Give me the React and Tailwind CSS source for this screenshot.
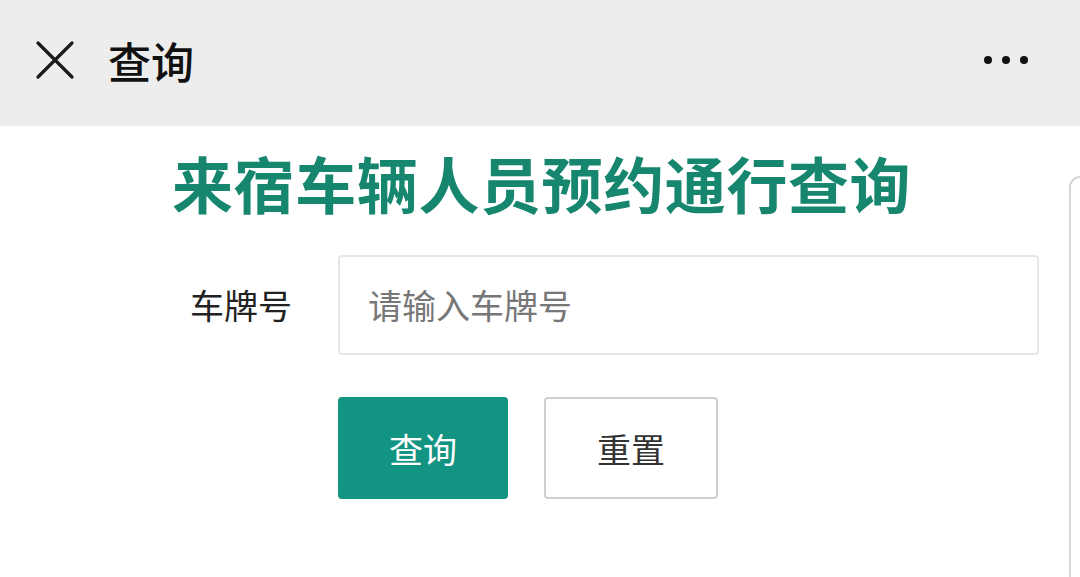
import React from "react";

const font = { fontFamily: '"Noto Sans CJK SC", "Noto Sans", sans-serif' };

const App = () => {
  return (
    <div className="w-[1080px] h-[577px] bg-white overflow-hidden flex flex-col" style={font}>
      {/* top bar */}
      <div className="h-[126px] bg-[#ededed] flex items-center pl-[34px] pr-[52px] pb-[6px]">
        <svg width="42" height="42" viewBox="0 0 42 42" className="shrink-0">
          <path d="M4 4 L38 38 M38 4 L4 38" stroke="#1a1a1a" strokeWidth="3.2" strokeLinecap="round" />
        </svg>
        <span className="ml-[32px] text-[43px] font-medium text-[#111] leading-none">查询</span>
        <div className="ml-auto flex items-center gap-[10px]">
          <span className="w-[8px] h-[8px] rounded-full bg-[#111]" />
          <span className="w-[8px] h-[8px] rounded-full bg-[#111]" />
          <span className="w-[8px] h-[8px] rounded-full bg-[#111]" />
        </div>
      </div>

      {/* body */}
      <div className="flex-1 flex">
        <div className="flex-1 flex flex-col">
          <h1 className="mt-[22px] ml-[172px] text-[61px] font-bold text-[#16866f] leading-[70px] tracking-[0.6px]">
            来宿车辆人员预约通行查询
          </h1>

          <div className="mt-[37px] flex items-center">
            <span className="ml-[190px] w-[148px] text-[34px] text-[#222] leading-none">车牌号</span>
            <div className="w-[701px] h-[100px] border-2 border-[#e6e6e6] rounded-[4px] flex items-center pl-[28px]">
              <span className="text-[34px] text-[#777] leading-none">请输入车牌号</span>
            </div>
          </div>

          <div className="mt-[42px] ml-[338px] flex gap-[36px]">
            <button className="w-[170px] h-[102px] rounded-[4px] bg-[#139482] text-white text-[34px] flex items-center justify-center">
              查询
            </button>
            <button className="w-[174px] h-[102px] rounded-[4px] border-2 border-[#cfcfcf] bg-white text-[#333] text-[34px] flex items-center justify-center">
              重置
            </button>
          </div>
        </div>

        <div className="w-[11px] mt-[50px] border-l-2 border-t-2 border-[#d6d6d6] rounded-tl-[12px]" />
      </div>
    </div>
  );
};

export default App;
